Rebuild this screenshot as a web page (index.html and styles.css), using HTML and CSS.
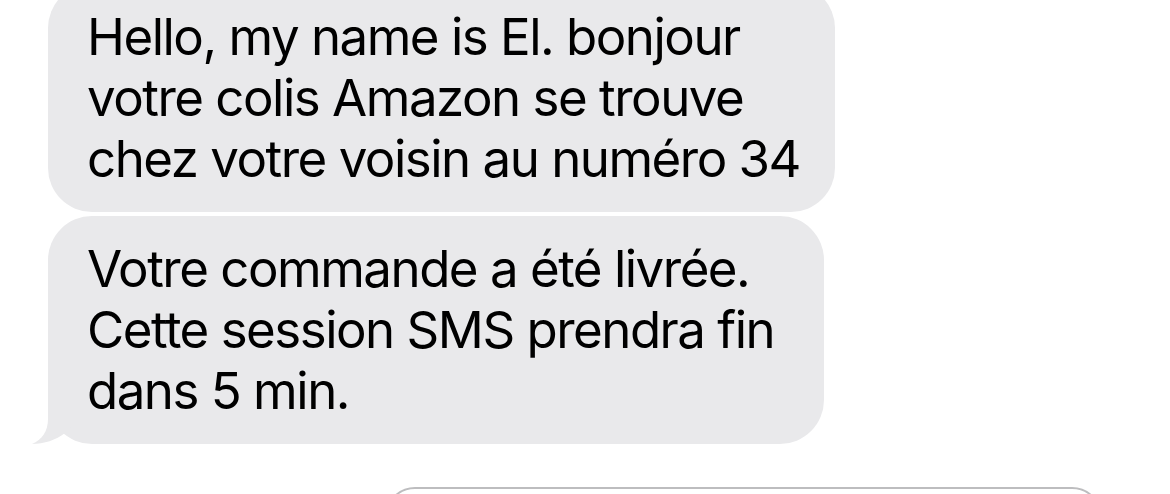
FILE: index.html
```html
<!DOCTYPE html>
<html lang="fr">
<head>
<meta charset="utf-8">
<link rel="stylesheet" href="styles.css">
</head>
<body>
<div class="thread">
  <div class="bubble bubble-first">Hello, my name is El. bonjour<br>votre colis Amazon se trouve<br>chez votre voisin au numéro 34</div>
  <div class="bubble bubble-last">Votre commande a été livrée.<br>Cette session SMS prendra fin<br>dans 5 min.
    <svg class="tail" width="64" height="46" viewBox="0 0 64 46"><path d="M18 0 L18 21 C18 33 12 42 2 46 C14 46 26 42 35 35 L42 28 L42 0 Z" fill="#e9e9eb"/></svg>
  </div>
</div>
<div class="compose">
  <div class="compose-field"></div>
</div>
</body>
</html>
```
FILE: styles.css
```css
html, body {
  margin: 0;
  padding: 0;
  background: #ffffff;
  overflow: hidden;
  height: 494px;
}
.thread {
  display: flex;
  flex-direction: column;
  align-items: flex-start;
  gap: 4px;
  padding-left: 48px;
  margin-top: -16px;
}
.bubble {
  position: relative;
  box-sizing: border-box;
  background: #e9e9eb;
  color: #000;
  font-family: Inter, "Liberation Sans", sans-serif;
  font-size: 51px;
  line-height: 61px;
  letter-spacing: -1.5px;
  padding: 22px 0 23px 39px;
  border-radius: 44px;
  white-space: nowrap;
}
.bubble-first { width: 787px; }
.bubble-last { width: 776px; }
.tail {
  position: absolute;
  left: -18px;
  bottom: 0;
  display: block;
}
.compose {
  display: flex;
  padding-left: 385px;
  margin-top: 43px;
}
.compose-field {
  width: 717px;
  height: 60px;
  box-sizing: border-box;
  border: 2px solid #bdbdbf;
  border-radius: 36px;
}
```
